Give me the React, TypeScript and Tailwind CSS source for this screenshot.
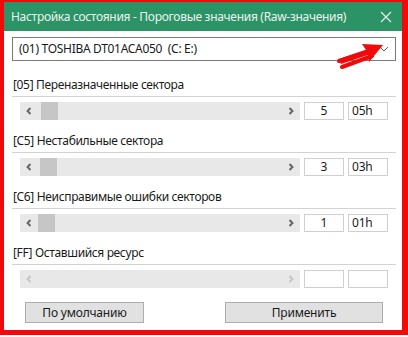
import React from "react";

const font = { fontFamily: '"Noto Sans", "Open Sans", sans-serif' };

function ScrollRow({ value, hex, thumb, disabled }: { value?: string; hex?: string; thumb?: number; disabled?: boolean }) {
  const arrowColor = disabled ? "#c4c4c4" : "#606060";
  return (
    <div className="flex mt-[5px] ml-2 h-[18px] gap-1">
      <div className="relative w-[280px] h-[18px] bg-[#e8e8e8] flex items-center justify-between px-[5px]">
        <svg width="8" height="8" viewBox="0 0 8 8">
          <path d="M5.5 1 L2.5 4 L5.5 7" fill="none" stroke={arrowColor} strokeWidth="1.8" />
        </svg>
        {thumb !== undefined && (
          <div className="absolute top-0 h-[18px] w-[17px] bg-[#c6c6c6]" style={{ left: thumb }} />
        )}
        <svg width="8" height="8" viewBox="0 0 8 8">
          <path d="M2.5 1 L5.5 4 L2.5 7" fill="none" stroke={arrowColor} strokeWidth="1.8" />
        </svg>
      </div>
      <div className="w-10 h-[18px] border border-[#cfcfcf] bg-white flex items-center justify-center text-[12px] leading-none text-[#1a1a1a]">
        {value}
      </div>
      <div className="w-10 h-[18px] border border-[#cfcfcf] bg-white flex items-center pl-[3px] text-[12px] leading-none text-[#1a1a1a] tracking-[-0.2px]">
        {hex}
      </div>
    </div>
  );
}

function Section({ label, mt, children }: { label: string; mt: string; children: React.ReactNode }) {
  return (
    <div className={mt}>
      <div className="mr-[6px] border-b border-[#d2d2d2] pb-[3px]">
        <div className="h-4 leading-4 text-[12px] tracking-[-0.35px] text-[#1a1a1a] pl-px">{label}</div>
      </div>
      {children}
    </div>
  );
}

export default function App() {
  return (
    <div className="w-[408px] h-[337px] bg-white relative overflow-hidden" style={font}>
      <div className="h-[335px] border-l-4 border-t-2 border-r-[6px] border-b-[5px] border-[#f00a0a] flex flex-col bg-white">
        <div className="h-[29px] bg-[#2b9366] flex items-center justify-between pl-[7px] pr-[10px]">
          <span className="text-[12px] tracking-[-0.3px] text-[#eaf5ef] whitespace-nowrap">
            Настройка состояния - Пороговые значения (Raw-значения)
          </span>
          <svg width="12" height="12" viewBox="0 0 12 12">
            <path d="M1 1 L11 11 M11 1 L1 11" stroke="#e6f3ec" strokeWidth="1.2" />
          </svg>
        </div>
        <div className="pl-2 flex flex-col">
          <div className="mt-[6px] mr-[6px] h-6 border border-[#7a7a7a] bg-white flex items-center justify-between pl-[6px] pr-[6px]">
            <span className="text-[12px] tracking-[-0.3px] text-[#1a1a1a] whitespace-pre">(01) TOSHIBA DT01ACA050  (C: E:)</span>
            <svg width="10" height="6" viewBox="0 0 10 6">
              <path d="M1 1 L5 5 L9 1" fill="none" stroke="#606060" strokeWidth="1" />
            </svg>
          </div>
          <Section label="[05] Переназначенные сектора" mt="mt-4">
            <ScrollRow value="5" hex="05h" thumb={21} />
          </Section>
          <Section label="[C5] Нестабильные сектора" mt="mt-[13px]">
            <ScrollRow value="3" hex="03h" thumb={20} />
          </Section>
          <Section label="[C6] Неисправимые ошибки секторов" mt="mt-[13px]">
            <ScrollRow value="1" hex="01h" thumb={18} />
          </Section>
          <Section label="[FF] Оставшийся ресурс" mt="mt-[13px]">
            <ScrollRow disabled />
          </Section>
          <div className="flex mt-[14px]">
            <button className="ml-[13px] w-[119px] h-[21px] bg-[#e1e1e1] border border-[#adadad] text-[12px] tracking-[-0.2px] text-[#1a1a1a] leading-none">
              По умолчанию
            </button>
            <button className="ml-[81px] w-[158px] h-[21px] bg-[#e1e1e1] border border-[#adadad] text-[12px] tracking-[-0.2px] text-[#1a1a1a] leading-none">
              Применить
            </button>
          </div>
        </div>
      </div>
      <svg className="absolute left-[336px] top-[42px]" width="50" height="28" viewBox="0 0 50 28">
        <path d="M47 3 L26 2 L30 8 L3 17 L5 22 L32 13 L33 20 Z" fill="#f00a0a" />
        <path d="M6 25 L36 14" stroke="#f00a0a" strokeWidth="4" strokeLinecap="round" />
        <path d="M3 19 L33 9" stroke="#f00a0a" strokeWidth="4" strokeLinecap="round" />
      </svg>
    </div>
  );
}
